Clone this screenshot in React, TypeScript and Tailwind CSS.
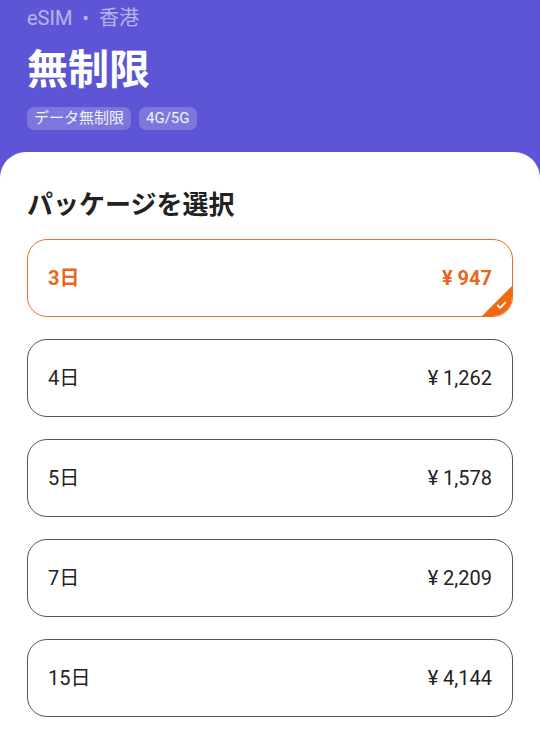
import { Check } from "lucide-react";

const PACKAGES = [
  { days: "3日", price: "¥ 947" },
  { days: "4日", price: "¥ 1,262" },
  { days: "5日", price: "¥ 1,578" },
  { days: "7日", price: "¥ 2,209" },
  { days: "15日", price: "¥ 4,144" },
];

const FONT = { fontFamily: 'Roboto, "Noto Sans CJK JP", sans-serif' };

function PackageCard({ days, price, selected }: { days: string; price: string; selected: boolean }) {
  return (
    <div
      className={`relative flex h-[78px] items-center justify-between overflow-hidden rounded-[20px] border-[1.5px] bg-white px-[20px] text-[20px] ${
        selected ? "border-[#e8702a] font-bold text-[#e8661e]" : "border-[#555] text-[#222]"
      }`}
    >
      <span>{days}</span>
      <span className="whitespace-pre">{price.replace("¥ ", "¥ ")}</span>
      {selected && (
        <div className="absolute bottom-0 right-0 h-[30px] w-[30px] bg-[#f26a10] [clip-path:polygon(100%_0,100%_100%,0_100%)]">
          <Check className="absolute bottom-[5px] right-[5px] h-[11px] w-[11px] text-white" strokeWidth={4} />
        </div>
      )}
    </div>
  );
}

export default function App() {
  return (
    <div className="min-h-[733px] w-[540px] bg-[#5d55d5]" style={FONT}>
      <div className="px-[27px] pb-[22px] pt-[6px]">
        <p className="whitespace-pre text-[20px] leading-[24px] text-white/55">eSIM  •  香港</p>
        <h1 className="mt-[16px] text-[41px] font-bold leading-[48px] text-white">無制限</h1>
        <div className="mt-[13px] flex gap-[8px]">
          <span className="rounded-[7px] bg-white/20 px-[7px] text-[15px] leading-[23px] text-white/90">データ無制限</span>
          <span className="rounded-[7px] bg-white/20 px-[7px] text-[15px] leading-[23px] text-white/90">4G/5G</span>
        </div>
      </div>
      <div className="min-h-[581px] rounded-t-[26px] bg-white px-[27px] pb-[20px] pt-[37px]">
        <h2 className="text-[26px] font-bold leading-[32px] text-[#222]">パッケージを選択</h2>
        <div className="mt-[18px] flex flex-col gap-[22px]">
          {PACKAGES.map((p, i) => (
            <PackageCard key={p.days} {...p} selected={i === 0} />
          ))}
        </div>
      </div>
    </div>
  );
}
